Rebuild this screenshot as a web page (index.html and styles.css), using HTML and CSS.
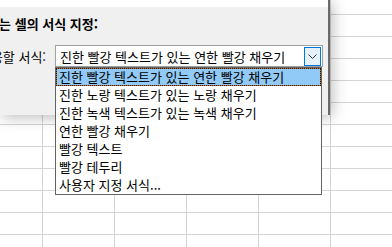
FILE: index.html
```html
<!DOCTYPE html>
<html lang="ko">
<head>
  <meta charset="UTF-8">
  <title>조건부 서식</title>
  <link rel="stylesheet" href="styles.css">
</head>
<body>
  <div class="sheet"></div>

  <div class="dialog">
    <div class="top-strip"></div>
    <div class="content">
      <div class="heading"><span>다음 값을 포함하는 셀의 서식 지정:</span></div>
      <div class="row">
        <div class="label"><span>적용할 서식:</span></div>
        <div class="combo">
          <span class="combo-text">진한 빨강 텍스트가 있는 연한 빨강 채우기</span>
          <span class="combo-btn">
            <svg width="9" height="5" viewBox="0 0 9 5"><path d="M0.5 0.5 L4.5 4.5 L8.5 0.5" fill="none" stroke="#333" stroke-width="1"/></svg>
          </span>
        </div>
      </div>
    </div>
  </div>

  <ul class="list">
    <li class="selected">진한 빨강 텍스트가 있는 연한 빨강 채우기</li>
    <li>진한 노랑 텍스트가 있는 노랑 채우기</li>
    <li>진한 녹색 텍스트가 있는 녹색 채우기</li>
    <li>연한 빨강 채우기</li>
    <li>빨강 텍스트</li>
    <li>빨강 테두리</li>
    <li>사용자 지정 서식...</li>
  </ul>
</body>
</html>
```

FILE: styles.css
```css
html, body {
  margin: 0;
  height: 100%;
  overflow: hidden;
}
body {
  font-family: "Noto Sans CJK KR", "Noto Sans", sans-serif;
  font-size: 13px;
  color: #000;
  background: #fff;
  position: relative;
}
.sheet {
  position: absolute;
  inset: 0;
  background-image:
    linear-gradient(to right, #d4d4d4 1px, transparent 1px),
    linear-gradient(to bottom, #d4d4d4 1px, transparent 1px);
  background-size: 72px 22px;
  background-position: 42px 14px;
}
.dialog {
  position: absolute;
  left: 0;
  top: 0;
  width: 328px;
  height: 115px;
  background: #f0f0f0;
  border-right: 2px solid #6a6a6a;
  box-shadow: 2px 2px 14px rgba(0, 0, 0, 0.28);
}
.top-strip {
  height: 7px;
  background: #fff;
}
.content {
  display: flex;
  flex-direction: column;
}
.heading {
  width: 98px;
  height: 18px;
  margin-top: 8px;
  display: flex;
  justify-content: flex-end;
  overflow: hidden;
  white-space: nowrap;
  font-weight: bold;
  line-height: 18px;
}
.row {
  display: flex;
  align-items: center;
  margin-top: 12px;
  gap: 9px;
}
.label {
  width: 46px;
  display: flex;
  justify-content: flex-end;
  overflow: hidden;
  white-space: nowrap;
}
.combo {
  width: 262px;
  height: 20px;
  background: #fff;
  border: 1px solid #a0a0a0;
  display: flex;
  align-items: center;
  justify-content: space-between;
  padding-left: 4px;
  box-sizing: content-box;
}
.combo-text {
  white-space: nowrap;
}
.combo-btn {
  width: 15px;
  height: 17px;
  margin-right: 1px;
  border: 1px solid #0078d7;
  background: #e5f1fb;
  display: flex;
  align-items: center;
  justify-content: center;
}
.list {
  position: absolute;
  left: 55px;
  top: 67px;
  width: 265px;
  margin: 0;
  padding: 0;
  list-style: none;
  background: #fff;
  border: 1px solid #646464;
}
.list li {
  height: 16px;
  line-height: 16px;
  padding: 0 2px;
  border: 1px solid transparent;
  white-space: nowrap;
}
.list li.selected {
  border: 1px dotted #2a1a0a;
  background:
    linear-gradient(#91c9f7, #91c9f7) padding-box,
    #b8742c border-box;
}
```
